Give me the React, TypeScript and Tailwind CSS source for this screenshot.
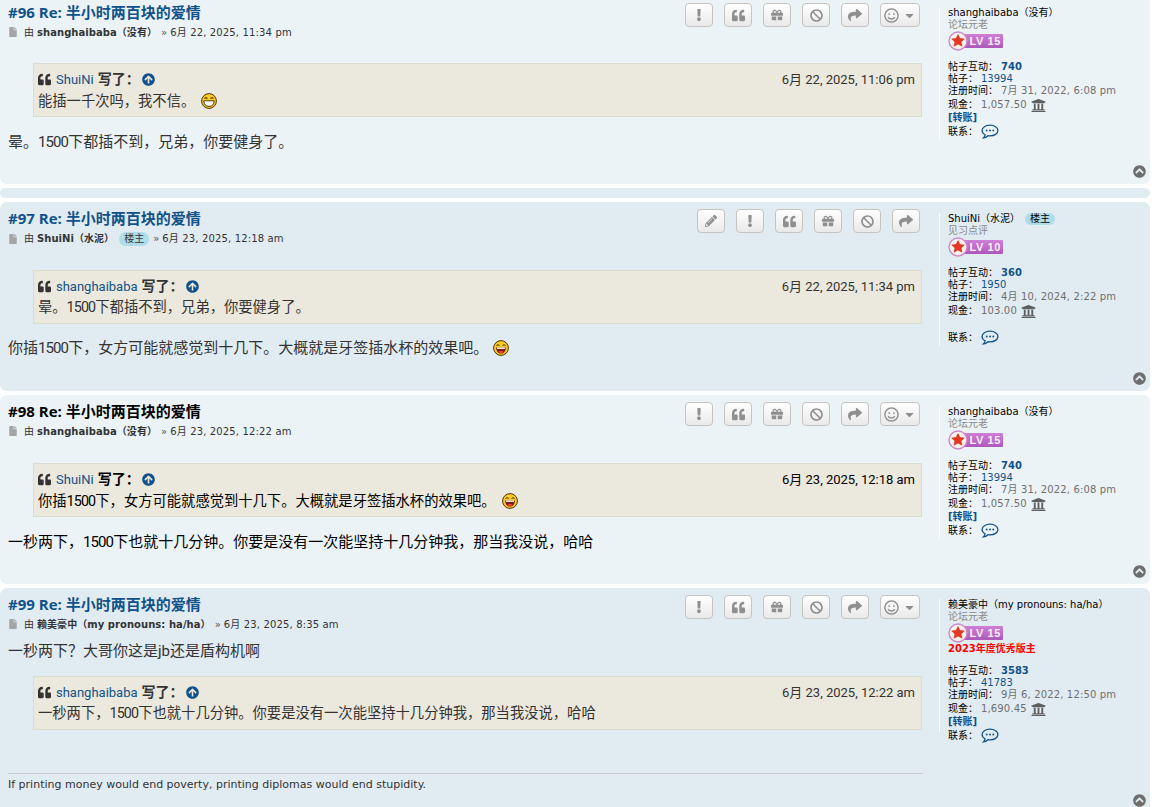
import React from 'react';
import {
  FaExclamation,
  FaQuoteLeft,
  FaGift,
  FaBan,
  FaShare,
  FaPencilAlt,
  FaRegSmile,
  FaCaretDown,
  FaFile,
  FaUniversity,
  FaArrowCircleUp,
  FaChevronCircleUp,
} from 'react-icons/fa';

const verdana = { fontFamily: '"DejaVu Sans", "Noto Sans CJK SC", sans-serif' };
const heading = { fontFamily: '"Open Sans", "Noto Sans CJK SC", sans-serif' };
const trebuchet = { fontFamily: 'Roboto, "Noto Sans CJK SC", sans-serif' };

function ActionButton({ children, wide }: { children: React.ReactNode; wide?: boolean }) {
  return (
    <div
      className={`flex h-6 items-center justify-center gap-1 rounded-[4px] border border-[#c7c3bf] bg-gradient-to-b from-white to-[#e9e9e9] text-[#8f8f8f] ${wide ? 'w-10' : 'w-7'}`}
    >
      {children}
    </div>
  );
}

function Actions({ edit, react }: { edit?: boolean; react?: boolean }) {
  return (
    <div className="flex gap-[11px]">
      {edit && (
        <ActionButton>
          <FaPencilAlt size={12} />
        </ActionButton>
      )}
      <ActionButton>
        <FaExclamation size={12} />
      </ActionButton>
      <ActionButton>
        <FaQuoteLeft size={13} />
      </ActionButton>
      <ActionButton>
        <FaGift size={12} />
      </ActionButton>
      <ActionButton>
        <FaBan size={13} />
      </ActionButton>
      <ActionButton>
        <FaShare size={14} />
      </ActionButton>
      {react && (
        <ActionButton wide>
          <FaRegSmile size={15} />
          <FaCaretDown size={13} />
        </ActionButton>
      )}
    </div>
  );
}

function Grin({ laugh }: { laugh?: boolean }) {
  return (
    <svg width="16" height="16" viewBox="0 0 16 16" className="inline-block">
      <circle cx="8" cy="8" r="7.4" fill="#fbc928" stroke="#4a380c" strokeWidth="1" />
      {laugh ? (
        <>
          <path d="M3.5 5.5q1.5-1.6 3 0M9.5 5.5q1.5-1.6 3 0" fill="none" stroke="#3a2a08" strokeWidth="1" />
          <path d="M3 7.5h10q-.6 6-5 6t-5-6z" fill="#7a1a10" />
          <path d="M5.5 11.5q2.5-1.6 5 0q-1 2-2.5 2t-2.5-2z" fill="#e8402a" />
          <rect x="4" y="7.5" width="8" height="1.4" fill="#fff" />
        </>
      ) : (
        <>
          <path d="M3.5 5.5q1.5-1.6 3 0M9.5 5.5q1.5-1.6 3 0" fill="none" stroke="#3a2a08" strokeWidth="1.1" />
          <path d="M2.8 7.8h10.4q-.4 5.6-5.2 5.6t-5.2-5.6z" fill="#fff" stroke="#3a2a08" strokeWidth=".9" />
        </>
      )}
    </svg>
  );
}

function CommentIcon() {
  return (
    <svg width="18" height="16" viewBox="0 0 17 15" className="ml-[3px] text-[#105289]">
      <path
        d="M8.5 1C4.4 1 1 3.2 1 6.1c0 1.7 1.1 3.1 2.9 4 -.2 1.1-.8 2.2-1.6 3 1.7-.2 3.1-1 4.2-2.1.6.1 1.3.2 2 .2 4.1 0 7.5-2.2 7.5-5.1S12.6 1 8.5 1z"
        fill="none"
        stroke="currentColor"
        strokeWidth="1.2"
      />
      <circle cx="5.4" cy="6.1" r=".9" fill="currentColor" />
      <circle cx="8.5" cy="6.1" r=".9" fill="currentColor" />
      <circle cx="11.6" cy="6.1" r=".9" fill="currentColor" />
    </svg>
  );
}

function RankBadge({ level }: { level: number }) {
  return (
    <div className="relative flex h-5 w-[55px] items-center">
      <div className="absolute top-[3px] left-[8px] flex h-3.5 w-[47px] items-center justify-end rounded-r-[1px] bg-gradient-to-b from-[#cf7fd6] to-[#ad58bb] pr-[2px]">
        <span
          className="text-[11px] leading-none font-bold tracking-[0.6px] text-[#fbeefc]"
          style={{ fontFamily: '"Liberation Sans", sans-serif' }}
        >
          LV {level}
        </span>
      </div>
      <svg width="20" height="20" viewBox="0 0 20 20" className="relative">
        <circle cx="10" cy="10" r="9" fill="#fdf0ea" stroke="#c98acb" strokeWidth="1.4" />
        <path
          d="M10 3.6l1.9 3.9 4.4.5-3.3 2.9 1 4.3-4-2.2-4 2.2 1-4.3L3.7 8l4.4-.5z"
          fill="#e8371f"
          stroke="#b9230f"
          strokeWidth=".5"
        />
      </svg>
    </div>
  );
}

// digits in the reference font are narrower than Roboto's
function Mixed({ text }: { text: string }) {
  return (
    <>
      {text.split(/(\d+)/).map((part, i) =>
        /^\d+$/.test(part) ? (
          <span key={i} className="tracking-[-0.06em]">
            {part}
          </span>
        ) : (
          <span key={i}>{part}</span>
        ),
      )}
    </>
  );
}

type Quote = { author: string; date: string; body: string; smiley?: 'grin' | 'laugh' };

type PostData = {
  no: number;
  height: string;
  top: string;
  quoteGap: string;
  bodyGap: string;
  hot?: boolean;
  bg: string;
  author: string;
  owner?: boolean;
  date: string;
  edit?: boolean;
  react?: boolean;
  quote: Quote;
  body: string;
  bodySmiley?: boolean;
  bodyFirst?: boolean;
  signature?: string;
  rounded: string;
  profile: {
    name: string;
    rank: string;
    level: number;
    award?: string;
    interact: string;
    posts: string;
    joined: string;
    cash: string;
    transfer: boolean;
  };
};

const shanghaibaba = {
  name: 'shanghaibaba（没有）',
  rank: '论坛元老',
  level: 15,
  interact: '740',
  posts: '13994',
  joined: '7月 31, 2022, 6:08 pm',
  cash: '1,057.50',
  transfer: true,
};

const posts: PostData[] = [
  {
    no: 96,
    height: 'h-[184px]',
    top: 'pt-[2px]',
    quoteGap: 'mt-[22px]',
    bodyGap: 'mt-[15px]',
    bg: 'bg-[#ecf3f7]',
    author: 'shanghaibaba（没有）',
    date: '6月 22, 2025, 11:34 pm',
    react: true,
    quote: { author: 'ShuiNi', date: '6月 22, 2025, 11:06 pm', body: '能插一千次吗，我不信。', smiley: 'grin' },
    body: '晕。1500下都插不到，兄弟，你要健身了。',
    rounded: 'rounded-b-[7px]',
    profile: shanghaibaba,
  },
  {
    no: 97,
    height: 'h-[189px]',
    top: 'pt-[6px]',
    quoteGap: 'mt-[23px]',
    bodyGap: 'mt-[14px]',
    bg: 'bg-[#e1ebf2]',
    author: 'ShuiNi（水泥）',
    owner: true,
    date: '6月 23, 2025, 12:18 am',
    edit: true,
    quote: { author: 'shanghaibaba', date: '6月 22, 2025, 11:34 pm', body: '晕。1500下都插不到，兄弟，你要健身了。' },
    body: '你插1500下，女方可能就感觉到十几下。大概就是牙签插水杯的效果吧。',
    bodySmiley: true,
    rounded: 'rounded-[7px]',
    profile: {
      name: 'ShuiNi（水泥）',
      rank: '见习点评',
      level: 10,
      interact: '360',
      posts: '1950',
      joined: '4月 10, 2024, 2:22 pm',
      cash: '103.00',
      transfer: false,
    },
  },
  {
    no: 98,
    height: 'h-[189px]',
    top: 'pt-[6px]',
    quoteGap: 'mt-[23px]',
    bodyGap: 'mt-[15px]',
    hot: true,
    bg: 'bg-[#ecf3f7]',
    author: 'shanghaibaba（没有）',
    date: '6月 23, 2025, 12:22 am',
    react: true,
    quote: {
      author: 'ShuiNi',
      date: '6月 23, 2025, 12:18 am',
      body: '你插1500下，女方可能就感觉到十几下。大概就是牙签插水杯的效果吧。',
      smiley: 'laugh',
    },
    body: '一秒两下，1500下也就十几分钟。你要是没有一次能坚持十几分钟我，那当我没说，哈哈',
    rounded: 'rounded-[7px]',
    profile: shanghaibaba,
  },
  {
    no: 99,
    height: 'h-[225px]',
    top: 'pt-[6px]',
    quoteGap: 'mt-[8px]',
    bodyGap: 'mt-[15px]',
    bg: 'bg-[#e1ebf2]',
    author: '赖美豪中（my pronouns: ha/ha）',
    date: '6月 23, 2025, 8:35 am',
    react: true,
    quote: {
      author: 'shanghaibaba',
      date: '6月 23, 2025, 12:22 am',
      body: '一秒两下，1500下也就十几分钟。你要是没有一次能坚持十几分钟我，那当我没说，哈哈',
    },
    body: '一秒两下？大哥你这是jb还是盾构机啊',
    bodyFirst: true,
    signature: 'If printing money would end poverty, printing diplomas would end stupidity.',
    rounded: 'rounded-t-[7px]',
    profile: {
      name: '赖美豪中（my pronouns: ha/ha）',
      rank: '论坛元老',
      level: 15,
      award: '2023年度优秀版主',
      interact: '3583',
      posts: '41783',
      joined: '9月 6, 2022, 12:50 pm',
      cash: '1,690.45',
      transfer: true,
    },
  },
];

function QuoteBox({ quote, hot }: { quote: Quote; hot?: boolean }) {
  return (
    <div
      className={`ml-[25px] flex h-[54px] w-[889px] flex-col border border-[#dbdbce] bg-[#ebe8dd] pt-[6px] pr-[6px] pl-[4px] text-[14px] ${hot ? 'text-black' : 'text-[#333333]'}`}
      style={trebuchet}
    >
      <div className="flex h-[19px] items-center justify-between leading-[19px]">
        <div className="flex items-center">
          <FaQuoteLeft size={13} className="mr-[5px] text-[#333333]" />
          <span className="text-[13px] text-[#105289]">{quote.author}</span>
          <span className="ml-1 font-semibold">写了：</span>
          <FaArrowCircleUp size={13} className="ml-[2px] text-[#105289]" />
        </div>
        <span className="text-[13px]">{quote.date}</span>
      </div>
      <div
        className={`flex h-[20px] items-center gap-[6px] text-[14.3px] leading-[20px] ${quote.smiley ? 'mt-[2px]' : 'mt-[1px]'}`}
      >
        <span>
          <Mixed text={quote.body} />
        </span>
        {quote.smiley && <Grin laugh={quote.smiley === 'laugh'} />}
      </div>
    </div>
  );
}

function PostBody({ post }: { post: PostData }) {
  return (
    <div
      className={`flex h-[20px] items-center text-[15px] leading-[20px] ${post.hot ? 'text-black' : 'text-[#333333]'}`}
      style={trebuchet}
    >
      <span>
        <Mixed text={post.body} />
      </span>
      {post.bodySmiley && (
        <span className="ml-[5px] flex">
          <Grin laugh />
        </span>
      )}
    </div>
  );
}

function Profile({ profile, owner }: { profile: PostData['profile']; owner?: boolean }) {
  return (
    <div
      className="mt-[5px] ml-[16px] flex h-[133px] w-[205px] flex-col border-l border-white pl-2 text-[10px] leading-[12px] text-black"
      style={verdana}
    >
      <div className="flex h-3 items-center">
        <span>{profile.name}</span>
        {owner && <span className="ml-[5px] rounded-full bg-[#b0dbe8] px-[5px]">楼主</span>}
      </div>
      <div className="text-[#8a8a8a]">{profile.rank}</div>
      <RankBadge level={profile.level} />
      {profile.award ? <div className="h-3 font-bold text-[#ff0000]">{profile.award}</div> : null}
      <div className="mt-[10px]">
        帖子互动：<span className="ml-[3px] font-bold text-[#105289]">{profile.interact}</span>
      </div>
      <div>
        帖子：<span className="ml-[3px] text-[#105289]">{profile.posts}</span>
      </div>
      <div>
        注册时间：<span className="ml-[3px] tracking-[0.15px] text-[#6f6f6f]">{profile.joined}</span>
      </div>
      <div className="mt-[1px] flex h-[14px] items-center">
        现金：<span className="ml-[3px] tracking-[0.15px] text-[#6f6f6f]">{profile.cash}</span>
        <FaUniversity size={15} className="ml-1 text-[#5f5f5f]" />
      </div>
      <div className="h-3 font-bold text-[#105289]">{profile.transfer ? '[转账]' : ''}</div>
      <div className="flex h-[18px] items-center">
        联系：
        <CommentIcon />
      </div>
    </div>
  );
}

function Post({ post }: { post: PostData }) {
  return (
    <div className={`relative flex shrink-0 ${post.height} ${post.top} ${post.bg} ${post.rounded}`}>
      <div className="flex w-[923px] shrink-0 flex-col pl-2">
        <div className="flex h-[20px] items-start justify-between pr-[3px]">
          <h3
            className={`text-[15px] leading-[20px] font-bold ${post.hot ? 'text-black' : 'text-[#105289]'}`}
            style={heading}
          >
            #{post.no} Re: 半小时两百块的爱情
          </h3>
          <div className="mt-[1px]">
            <Actions edit={post.edit} react={post.react} />
          </div>
        </div>
        <div
          className={`flex items-center text-[10px] text-[#333333] ${post.owner ? 'mt-[2px] h-[17px]' : 'mt-[1px] h-[18px]'}`}
          style={verdana}
        >
          <FaFile size={10} className="mr-[6px] text-[#a5a5a5]" />
          <span>由</span>
          <span className="ml-[3px] font-bold tracking-[0.05px]">{post.author}</span>
          {post.owner && (
            <span className="ml-[5px] rounded-full bg-[#b0dbe8] px-[5px] leading-[14px]">楼主</span>
          )}
          <span className="mr-[3px] ml-[4px] text-[#555555]">»</span>
          <span className="tracking-[0.15px]">{post.date}</span>
        </div>
        {post.bodyFirst ? (
          <>
            <div className="mt-[8px]">
              <PostBody post={post} />
            </div>
            <div className={post.bodyGap}>
              <QuoteBox quote={post.quote} />
            </div>
          </>
        ) : (
          <>
            <div className={post.quoteGap}>
              <QuoteBox quote={post.quote} hot={post.hot} />
            </div>
            <div className={post.bodyGap}>
              <PostBody post={post} />
            </div>
          </>
        )}
        {post.signature && (
          <div
            className="mt-[43px] border-t border-[#cccccc] pt-[4px] text-[11px] leading-[14px] text-[#333333]"
            style={verdana}
          >
            {post.signature}
          </div>
        )}
      </div>
      <Profile profile={post.profile} owner={post.owner} />
      <FaChevronCircleUp size={13} className="absolute right-[4px] bottom-[6px] text-[#6e6e6e]" />
    </div>
  );
}

export default function App() {
  return (
    <div className="flex h-[807px] w-[1150px] flex-col gap-1 overflow-hidden bg-white">
      <Post post={posts[0]} />
      <div className="h-[10px] shrink-0 rounded-[7px] bg-[#e1ebf2]" />
      <Post post={posts[1]} />
      <Post post={posts[2]} />
      <Post post={posts[3]} />
    </div>
  );
}
